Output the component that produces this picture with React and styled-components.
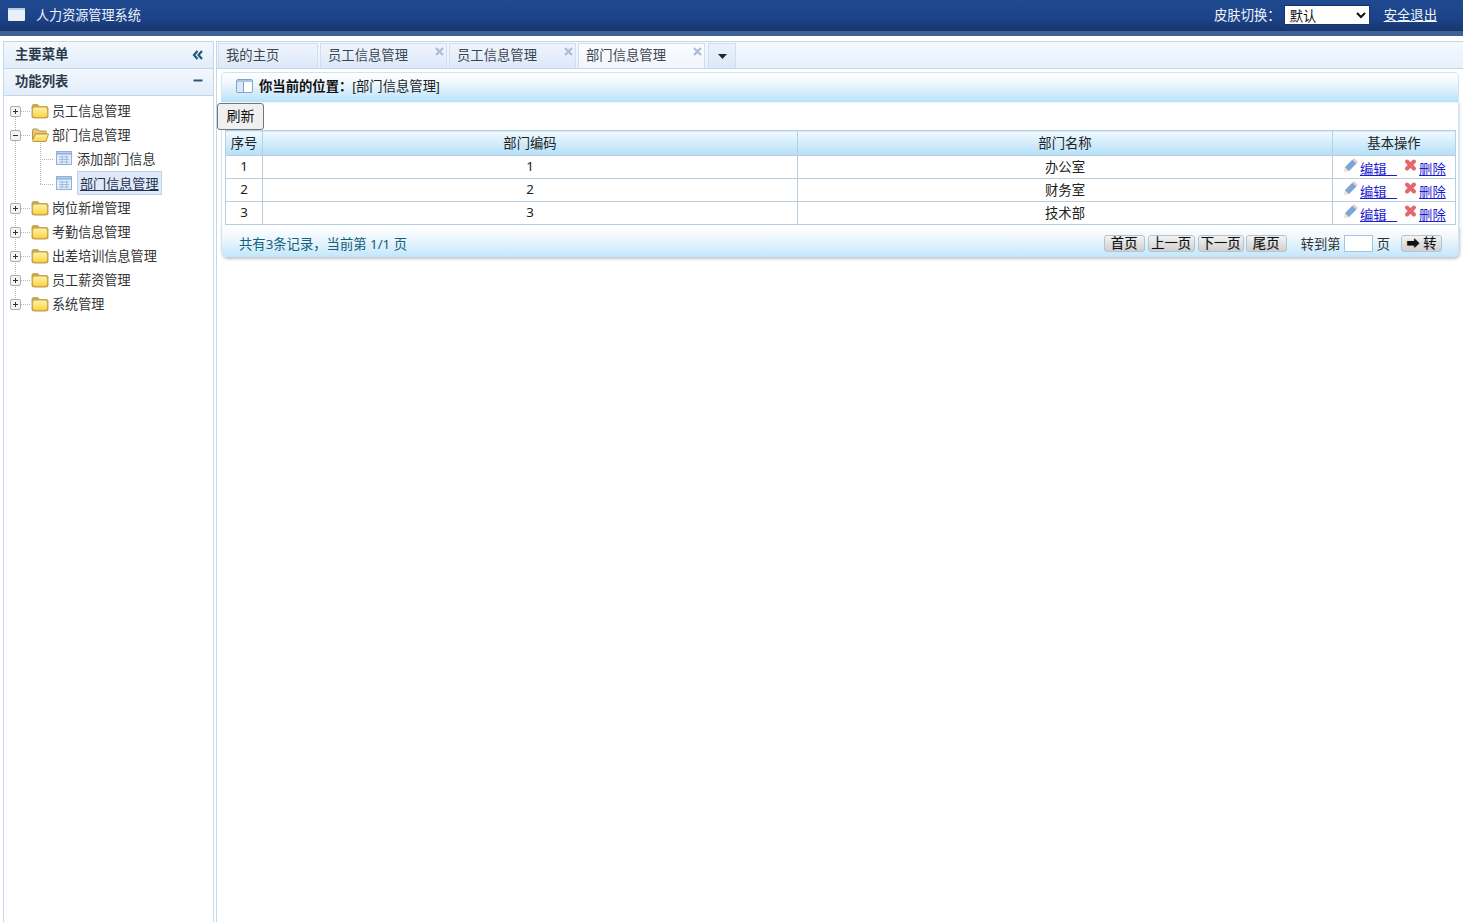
import React from 'react';
import styled, { createGlobalStyle } from 'styled-components';

const GlobalStyle = createGlobalStyle`
  html, body { margin: 0; padding: 0; height: 100%; background: #fff; overflow: hidden; }
  body { font-family: "Noto Sans", "Noto Sans CJK SC", sans-serif; font-size: 13.33px; color: #222; }
  #root { height: 100%; }
`;

const Page = styled.div`
  height: 922px;
  display: flex;
  flex-direction: column;
`;

const Header = styled.header`
  height: 29px;
  padding-bottom: 2px;
  flex: none;
  display: flex;
  align-items: center;
  padding-left: 8px;
  color: #eef3fa;
  background: linear-gradient(#1f4a8f, #1c4288 60%, #18366f);
  border-bottom: 5px solid #3f6296;
`;

const Logo = styled.svg`
  width: 17px;
  height: 13px;
  margin-right: 11px;
`;

const Title = styled.span`
  font-size: 13.1px;
  flex: 1;
`;

const SkinLabel = styled.span`
  margin-right: 3px;
`;

const SkinSelect = styled.select`
  width: 86px;
  height: 20px;
  margin: 0 14px 0 0;
  padding: 0 0 0 1px;
  font: inherit;
  border: 1px solid #16346b;
  background-color: #fff;
  color: #111;
`;

const Logout = styled.a`
  color: #eef3fa;
  text-decoration: underline;
  margin-right: 26px;
`;

const Body = styled.div`
  flex: 1;
  display: flex;
  padding-top: 5px;
  background: #fff;
`;

const Sidebar = styled.aside`
  width: 209px;
  margin-left: 3px;
  flex: none;
  border: 1px solid #c5d7ea;
  border-top-color: #ccd5de;
  border-bottom: none;
  display: flex;
  flex-direction: column;
`;

const SideBar = styled.div`
  height: ${p => p.$h}px;
  flex: none;
  box-sizing: border-box;
  display: flex;
  align-items: center;
  justify-content: space-between;
  padding: 0 9px 4px 11px;
  font-weight: bold;
  color: #2a3a4a;
  background: linear-gradient(#f3f8fe, #e2edfa);
  border-bottom: 1px solid #c4d6ea;
`;

const SideIcon = styled.svg`
  width: 12px;
  height: 12px;
  margin-top: ${p => p.$down}px;
`;

const Tree = styled.ul`
  list-style: none;
  margin: 0;
  padding: 2px 0 0;
  position: relative;
  font-size: 13.1px;
  &::before {
    content: '';
    position: absolute;
    left: 11px;
    top: 14px;
    height: 194px;
    border-left: 1px dotted #b8b8b8;
  }
`;

const Node = styled.li`
  height: 24px;
  display: flex;
  align-items: center;
  position: relative;
  color: #333;
  margin-top: ${p => (p.$last ? 1 : 0)}px;
  padding-left: ${p => (p.$child ? 52 : 6)}px;
  &::before {
    content: '';
    position: absolute;
    left: ${p => (p.$child ? 36 : 17)}px;
    top: 13px;
    width: ${p => (p.$child ? 13 : 9)}px;
    border-top: 1px dotted #b8b8b8;
  }
  ${p => p.$child && `
    &::after {
      content: '';
      position: absolute;
      left: 36px;
      top: ${p.$last ? -12 : -11}px;
      height: 25px;
      border-left: 1px dotted #b8b8b8;
    }
  `}
`;

const Toggle = styled.svg`
  width: 11px;
  height: 11px;
  position: relative;
  z-index: 1;
  margin: 2px 10px 0 0;
`;

const Folder = styled.svg`
  width: 18px;
  height: 16px;
  margin: 1px 3px 0 0;
  position: relative;
  z-index: 1;
`;

const Grid = styled.svg`
  width: 16px;
  height: 14px;
  margin-right: 5px;
`;

const NodeLabel = styled.span`
  ${p => p.$sel && `
    box-sizing: border-box;
    background: #dfe9f8;
    border: 1px solid #bcd2ec;
    padding: 0 2px;
    text-decoration: underline;
    color: #1f3050;
    height: 24px;
    line-height: 24px;
  `}
`;

const Main = styled.main`
  flex: 1;
  min-width: 0;
  margin-left: 2px;
  border-left: 1px solid #c5d7ea;
  display: flex;
  flex-direction: column;
`;

const TabStrip = styled.nav`
  height: 28px;
  box-sizing: border-box;
  flex: none;
  display: flex;
  gap: 2px;
  padding: 1px 0 0 1px;
  background: linear-gradient(#f4f9ff, #e6f0fb);
  border-top: 1px solid #ccd5de;
  border-bottom: 1px solid #c5d7ea;
`;

const Tab = styled.div`
  width: ${p => p.$w}px;
  box-sizing: border-box;
  position: relative;
  padding: 1px 0 0 7px;
  color: #3d4650;
  border: 1px solid #cfdef0;
  border-bottom: none;
  background: ${p => (p.$active ? 'linear-gradient(#fafcff, #f0f6fe)' : 'linear-gradient(#eff5fd, #dce9f9)')};
`;

const CloseMark = styled.svg`
  position: absolute;
  right: 2px;
  top: 3px;
  width: 9px;
  height: 9px;
`;

const TabMenu = styled.div`
  width: 28px;
  margin-left: 1px;
  box-sizing: border-box;
  display: flex;
  align-items: center;
  justify-content: center;
  border: 1px solid #cfdef0;
  border-bottom: none;
  background: linear-gradient(#eaf2fc, #dbe8f8);
`;

const Panel = styled.section`
  margin: 3px 4px 0 4px;
`;

const Crumb = styled.div`
  height: 30px;
  box-sizing: border-box;
  display: flex;
  align-items: center;
  padding: 0 0 4px 14px;
  border: 1px solid #cfe3f3;
  border-bottom: none;
  border-radius: 5px 5px 0 0;
  background: linear-gradient(#fff, #eff8fe 35%, #b9e2fa);
`;

const CrumbIcon = styled.svg`
  width: 17px;
  height: 14px;
  margin-right: 6px;
`;

const CrumbLabel = styled.b`
  color: #111;
`;

const CrumbPath = styled.span`
  font-family: "Liberation Sans", "Noto Sans CJK SC", sans-serif;
  color: #222;
`;

const PanelBody = styled.div`
  background: #fff;
  border-left: 1px solid #d3e3f1;
  border-right: 1px solid #d3e3f1;
  padding: 0 3px 0 3px;
  box-shadow: 1px 0 2px rgba(120, 150, 180, .3);
`;

const Refresh = styled.button`
  display: block;
  margin: 1px 0 0 -8px;
  width: 47px;
  height: 27px;
  padding: 0 0 3px;
  font: inherit;
  font-size: 14px;
  color: #111;
  background: #f0f0f0;
  border: 1px solid #767676;
  border-radius: 3px;
  position: relative;
`;

const Table = styled.table`
  width: 1230px;
  border-collapse: collapse;
  table-layout: fixed;
  color: #222;
  th, td {
    border: 1px solid #b9cfe0;
    text-align: center;
    padding: 0;
    font-weight: normal;
  }
  th {
    height: 23px;
    padding-bottom: 1px;
    background: linear-gradient(#f1f9fe, #b4dff9);
  }
  td {
    height: 20px;
    padding-bottom: 2px;
  }
`;

const RowAction = styled.span`
  display: flex;
  align-items: flex-start;
  padding-left: 11px;
  height: 22px;
  margin-bottom: -2px;
`;

const ActionIcon = styled.svg`
  width: 14px;
  height: 14px;
  margin-top: 2px;
  margin-right: 2px;
`;

const ActionLink = styled.a`
  color: #1a1ad0;
  text-decoration: underline;
  margin-top: 4px;
  line-height: 18px;
  white-space: pre;
  margin-right: ${p => (p.$gap ? 6 : 0)}px;
`;

const Footer = styled.footer`
  height: 32px;
  box-sizing: border-box;
  display: flex;
  align-items: center;
  padding: 5px 16px 0 17px;
  border: 1px solid #d3e3f1;
  border-top: none;
  border-radius: 0 0 6px 6px;
  color: #14607a;
  background: linear-gradient(#fff, #eff8fe 40%, #c5e7fb);
  box-shadow: 1px 2px 3px rgba(120, 140, 160, .5);
`;

const Summary = styled.span`
  flex: 1;
`;

const PageButton = styled.button`
  height: 17px;
  width: ${p => p.$w}px;
  margin: 0 0 0 ${p => p.$m || 3}px;
  padding: 0;
  font: inherit;
  line-height: 15px;
  color: #111;
  text-shadow: 0 0 1px rgba(0, 0, 0, .3);
  background: linear-gradient(#f4f4f4, #cfcfcf);
  border: 1px solid #b5c3cf;
  border-radius: 3px;
`;

const JumpText = styled.span`
  color: #333;
  margin-left: ${p => p.$m}px;
`;

const JumpInput = styled.input`
  width: 29px;
  height: 17px;
  box-sizing: border-box;
  margin: 0 3px;
  padding: 0;
  background: #fff;
  border: 1px solid #a8c4da;
`;

const FolderIcon = ({ open }) => (
  <Folder viewBox="0 0 18 16">
    <defs>
      <linearGradient id="fold" x1="0" y1="0" x2="0" y2="1">
        <stop offset="0" stopColor="#fff0a8" />
        <stop offset="1" stopColor="#fbd545" />
      </linearGradient>
    </defs>
    {open ? (
      <>
        <path d="M1.500 3.500Q1.500 2 3 2h3.500l2 2H14q1.500 0 1.500 1.500V7H5L1.500 12z" fill="#e6c774" stroke="#b9964a" />
        <path d="M4.500 7H17.500L15 14.500H2.500A1 1 0 0 1 1.500 13.500z" fill="url(#fold)" stroke="#b9964a" />
      </>
    ) : (
      <>
        <path d="M.5 4Q.5 1 3 1h3.500l2 2H15q2.500 0 2.500 2.500V13q0 2.500-2.500 2.500H3Q.5 15.500.5 13z" fill="#c9a650" />
        <rect x="2" y="4.500" width="14" height="9.500" rx="2" fill="url(#fold)" />
      </>
    )}
  </Folder>
);

const ToggleIcon = ({ open }) => (
  <Toggle viewBox="0 0 11 11">
    <rect x=".5" y=".5" width="10" height="10" rx="1.500" fill="#f4f4f4" stroke="#adadad" />
    <path d={open ? 'M3 5.500h5' : 'M3 5.500h5M5.500 3v5'} stroke="#333" fill="none" />
  </Toggle>
);

const GridIcon = () => (
  <Grid viewBox="0 0 16 14">
    <rect x=".5" y=".5" width="15" height="13" fill="#e3edf9" stroke="#8fb0d8" />
    <path d="M.5 2.500h15" stroke="#8fb0d8" strokeWidth="2" />
    <path d="M3 6h10M3 8.500h10M3 11h10M6 4.500v8M10.500 4.500v8" stroke="#9dbbdf" fill="none" />
  </Grid>
);

const Close = () => (
  <CloseMark viewBox="0 0 9 9">
    <path d="M1 1l7 7M8 1L1 8" stroke="#a9bed6" strokeWidth="2.200" />
  </CloseMark>
);

const PencilIcon = () => (
  <ActionIcon viewBox="0 0 14 14">
    <path d="M.8 9.200L8.500 1.500l4 4L4.800 13.200z" fill="#7aa7d8" />
    <path d="M8.500 1.500L10 0l4 4-1.500 1.500z" fill="#efc9c9" />
    <path d="M.8 9.200L0 14l4.800-.8z" fill="#efe0c6" />
  </ActionIcon>
);

const DeleteIcon = () => (
  <ActionIcon viewBox="0 0 14 14">
    <path d="M4 3.500l7 7M11 3.500l-7 7" stroke="#e2686c" strokeWidth="4" strokeLinecap="round" />
  </ActionIcon>
);

const treeItems = [
  { label: '员工信息管理' },
  { label: '部门信息管理', open: true },
  { label: '添加部门信息', child: true },
  { label: '部门信息管理', child: true, sel: true, last: true },
  { label: '岗位新增管理' },
  { label: '考勤信息管理' },
  { label: '出差培训信息管理' },
  { label: '员工薪资管理' },
  { label: '系统管理' },
];

const rows = [
  { no: 1, code: 1, name: '办公室' },
  { no: 2, code: 2, name: '财务室' },
  { no: 3, code: 3, name: '技术部' },
];

const App = () => (
  <Page>
    <GlobalStyle />
    <Header>
      <Logo viewBox="0 0 17 13">
        <rect width="17" height="13" rx="1" fill="#e8eff9" />
        <rect width="17" height="2" fill="#b4c9e6" />
      </Logo>
      <Title>人力资源管理系统</Title>
      <SkinLabel>皮肤切换：</SkinLabel>
      <SkinSelect defaultValue="默认">
        <option>默认</option>
      </SkinSelect>
      <Logout href="#">安全退出</Logout>
    </Header>
    <Body>
      <Sidebar>
        <SideBar $h={27}>
          主要菜单
          <SideIcon $down={4} viewBox="0 0 12 12">
            <path d="M5.500 2L2 6l3.500 4M10 2L6.500 6l3.500 4" fill="none" stroke="#245a72" strokeWidth="2.200" />
          </SideIcon>
        </SideBar>
        <SideBar $h={27}>
          功能列表
          <SideIcon $down={2} viewBox="0 0 12 12">
            <path d="M1.500 5.500h9" stroke="#245a72" strokeWidth="2" />
          </SideIcon>
        </SideBar>
        <Tree>
          {treeItems.map((item, i) => (
            <Node key={i} $child={item.child} $last={item.last}>
              {item.child ? <GridIcon /> : <ToggleIcon open={item.open} />}
              {!item.child && <FolderIcon open={item.open} />}
              <NodeLabel $sel={item.sel}>{item.label}</NodeLabel>
            </Node>
          ))}
        </Tree>
      </Sidebar>
      <Main>
        <TabStrip>
          <Tab $w={100}>我的主页</Tab>
          <Tab $w={127}>员工信息管理<Close /></Tab>
          <Tab $w={127}>员工信息管理<Close /></Tab>
          <Tab $w={127} $active>部门信息管理<Close /></Tab>
          <TabMenu>
            <svg width="9" height="5" viewBox="0 0 9 5"><path d="M0 0h9L4.500 5z" fill="#223" /></svg>
          </TabMenu>
        </TabStrip>
        <Panel>
          <Crumb>
            <CrumbIcon viewBox="0 0 17 14">
              <rect x=".5" y=".5" width="16" height="13" rx="1.500" fill="#fff" stroke="#7fa3cf" />
              <rect x="1" y="1" width="15" height="2" fill="#a9c4e6" />
              <rect x="1" y="3" width="6" height="10" fill="#dce8f6" />
              <path d="M7.500 3v10" stroke="#7fa3cf" />
            </CrumbIcon>
            <CrumbLabel>你当前的位置：</CrumbLabel>
            <CrumbPath>[部门信息管理]</CrumbPath>
          </Crumb>
          <PanelBody>
            <Refresh>刷新</Refresh>
            <Table>
              <colgroup>
                <col style={{ width: 37 }} />
                <col style={{ width: 535 }} />
                <col style={{ width: 535 }} />
                <col style={{ width: 123 }} />
              </colgroup>
              <thead>
                <tr>
                  <th>序号</th>
                  <th>部门编码</th>
                  <th>部门名称</th>
                  <th>基本操作</th>
                </tr>
              </thead>
              <tbody>
                {rows.map(r => (
                  <tr key={r.no}>
                    <td>{r.no}</td>
                    <td>{r.code}</td>
                    <td>{r.name}</td>
                    <td>
                      <RowAction>
                        <PencilIcon />
                        <ActionLink href="#" $gap>{'编辑   '}</ActionLink>
                        <DeleteIcon />
                        <ActionLink href="#">删除</ActionLink>
                      </RowAction>
                    </td>
                  </tr>
                ))}
              </tbody>
            </Table>
          </PanelBody>
          <Footer>
            <Summary>共有3条记录，当前第 1/1 页</Summary>
            <PageButton $w={41}>首页</PageButton>
            <PageButton $w={47}>上一页</PageButton>
            <PageButton $w={46}>下一页</PageButton>
            <PageButton $w={41} $m={2}>尾页</PageButton>
            <JumpText $m={14}>转到第</JumpText>
            <JumpInput />
            <JumpText $m={1}>页</JumpText>
            <PageButton $w={41} $m={11}>➡ 转</PageButton>
          </Footer>
        </Panel>
      </Main>
    </Body>
  </Page>
);

export default App;
